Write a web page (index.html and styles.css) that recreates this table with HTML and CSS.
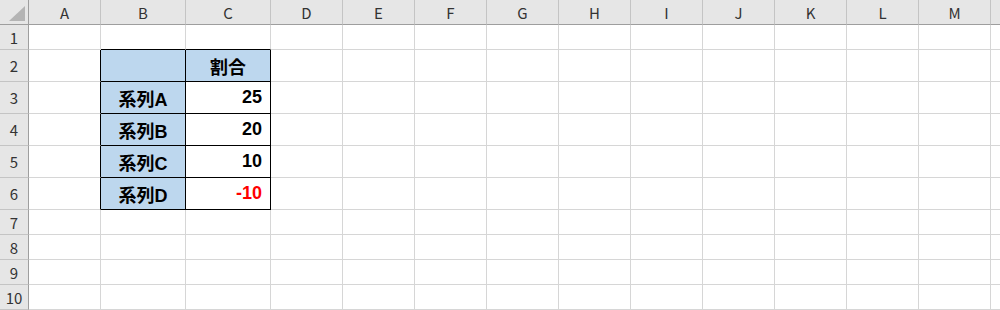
FILE: index.html
```html
<!DOCTYPE html>
<html>
<head>
    <link rel="stylesheet" href="styles.css">
</head>
<body>
    <div class="sheet" id="sheet"></div>

    <script>
        const letters = ['A', 'B', 'C', 'D', 'E', 'F', 'G', 'H', 'I', 'J', 'K', 'L', 'M', ''];

        // cell contents keyed by address
        const data = {
            B2: { text: '', cls: 'fill' },
            C2: { text: '割合', cls: 'fill center' },
            B3: { text: '系列A', cls: 'fill center' },
            B4: { text: '系列B', cls: 'fill center' },
            B5: { text: '系列C', cls: 'fill center' },
            B6: { text: '系列D', cls: 'fill center' },
            C3: { text: '25', cls: 'num' },
            C4: { text: '20', cls: 'num' },
            C5: { text: '10', cls: 'num' },
            C6: { text: '-10', cls: 'num neg' }
        };

        let sheet = document.getElementById('sheet');

        function addCell(cls, text) {
            let div = document.createElement('div');
            div.className = 'cell ' + cls;
            div.textContent = text || '';
            sheet.appendChild(div);
            return div;
        }

        let corner = addCell('corner', '');
        corner.innerHTML = '<svg width="28" height="24" viewBox="0 0 28 24"><polygon points="9,21 25,21 25,6" fill="#b4b4b4"/></svg>';

        letters.forEach(l => addCell('col-head', l));

        for (let r = 1; r <= 10; r++) {
            addCell('row-head', r);
            letters.forEach(l => {
                let addr = l + r;
                let cls = '';
                if (data[addr]) cls += data[addr].cls + ' boxed';
                // borders of the table that fall on neighbouring cells
                if (l === 'A' && r >= 2 && r <= 6) cls += ' edge-right';
                if ((l === 'B' || l === 'C') && r === 1) cls += ' edge-bottom';
                addCell(cls, data[addr] ? data[addr].text : '');
            });
        }
    </script>
</body>
</html>
```

FILE: styles.css
```css
body {
    margin: 0;
    background-color: #ffffff;
    font-family: "Liberation Sans", "Noto Sans CJK JP", sans-serif;
    overflow: hidden;
}

.sheet {
    display: grid;
    grid-template-columns: 29px 72px 85px 85px repeat(10, 72px) 1fr;
    grid-template-rows: 25px 25px 32px 32px 32px 32px 32px 25px 25px 25px 25px;
    width: 1000px;
    height: 310px;
}

.cell {
    box-sizing: border-box;
    border-right: 1px solid #d6d6d6;
    border-bottom: 1px solid #d6d6d6;
    display: flex;
    align-items: center;
    padding: 0 6px;
    font-size: 18px;
    font-weight: bold;
    color: #000000;
    white-space: nowrap;
}

.corner {
    background-color: #e6e6e6;
    border-right: 1px solid #9e9e9e;
    border-bottom: 1px solid #9e9e9e;
    padding: 0;
}

.corner svg {
    display: block;
}

.col-head, .row-head {
    background-color: #e6e6e6;
    justify-content: center;
    font-family: "Noto Sans CJK JP", "Noto Sans", sans-serif;
    font-size: 15px;
    font-weight: normal;
    color: #333333;
    padding: 0;
}

.col-head {
    border-right-color: #c4c4c4;
    border-bottom-color: #9e9e9e;
}

.row-head {
    border-right-color: #9e9e9e;
    border-bottom-color: #c4c4c4;
}

.fill {
    background-color: #bdd7ee;
}

.center {
    justify-content: center;
}

.num {
    justify-content: flex-end;
    padding-right: 8px;
}

.neg {
    color: #ff0000;
}

.boxed {
    border-right-color: #000000;
    border-bottom-color: #000000;
}

.edge-right {
    border-right-color: #000000;
}

.edge-bottom {
    border-bottom-color: #000000;
}
```
